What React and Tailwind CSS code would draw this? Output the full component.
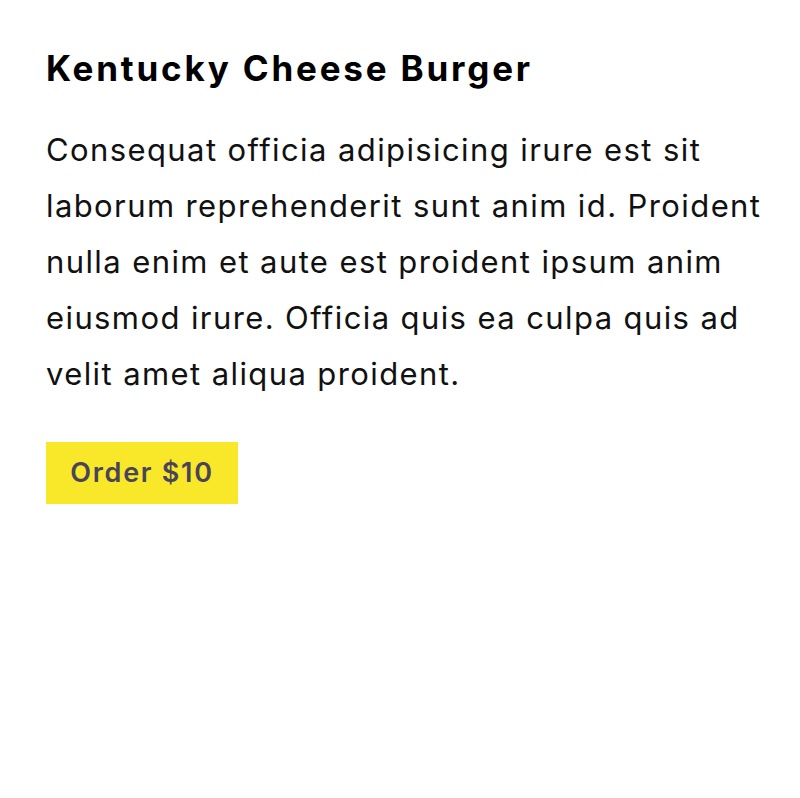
export default function App() {
  return (
    <div className="min-h-screen bg-white pl-[46px] pr-[30px] pt-[42px]" style={{ fontFamily: "Inter, sans-serif" }}>
      <h1 className="text-[35px] font-bold leading-[52px] tracking-[2.8px] text-black">
        Kentucky Cheese Burger
      </h1>
      <p className="mt-[28px] text-[31px] leading-[56px] tracking-[1.4px] text-[#111]">
        Consequat officia adipisicing irure est sit laborum reprehenderit sunt
        anim id. Proident nulla enim et aute est proident ipsum anim eiusmod
        irure. Officia quis ea culpa quis ad velit amet aliqua proident.
      </p>
      <button className="mt-[40px] h-[62px] w-[192px] bg-[#f9e82a] text-[27px] font-semibold tracking-[1.7px] text-[#4a4458]">
        Order $10
      </button>
    </div>
  );
}
